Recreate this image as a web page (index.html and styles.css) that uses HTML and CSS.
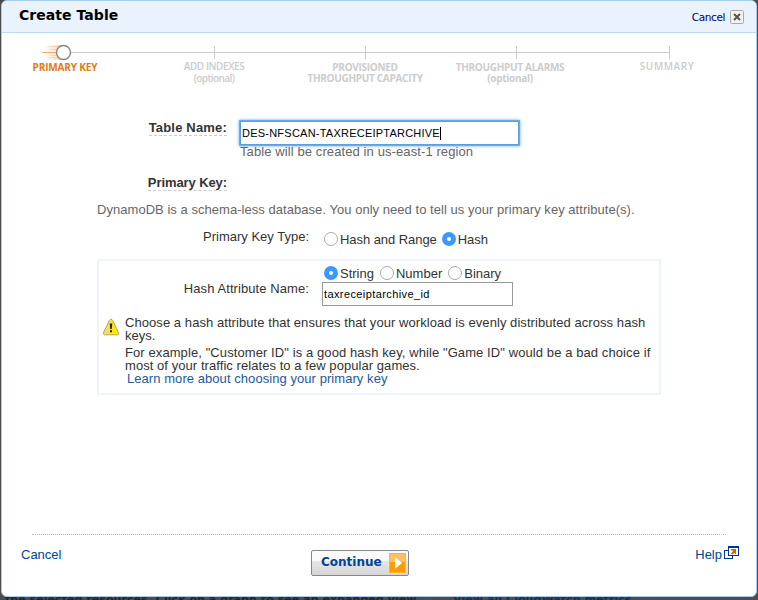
FILE: index.html
```html
<!DOCTYPE html>
<html lang="en">
<head>
<meta charset="utf-8">
<title>Create Table</title>
<link rel="stylesheet" href="styles.css">
</head>
<body>
<main class="dialog">
  <header class="head">
    <h1>Create Table</h1>
    <a class="close"><span>Cancel</span>
      <svg width="14" height="14" viewBox="0 0 14 14"><rect x=".5" y=".5" width="13" height="13" rx="1" fill="#f2f2ee" stroke="#aaa"/><path d="M4 4l6 6M10 4l-6 6" stroke="#555" stroke-width="2"/></svg>
    </a>
  </header>
  <svg class="track" width="740" height="26" viewBox="2 38 740 26">
    <defs><linearGradient id="trail"><stop offset="0" stop-color="#f3a55c" stop-opacity="0"/><stop offset="1" stop-color="#f3a55c" stop-opacity=".6"/></linearGradient></defs>
    <path d="M71 52.500H669M214.500 46v13M365.500 46v13M516.500 46v13M669.500 46v13" stroke="#ccc" fill="none"/>
    <path d="M45 46h16v1H45zM48 49h12v1H48zM50 55h10v1H50zM47 57h14v1H47z" fill="url(#trail)"/>
    <rect x="44" y="45" width="18" height="15" fill="url(#trail)" opacity=".7"/>
    <path d="M42 52.500h15" stroke="#f0ad70"/>
    <circle cx="63.500" cy="52.500" r="7" fill="#fff" stroke="#858585" stroke-width="1.400"/>
  </svg>
  <ol class="steps">
    <li class="on"><span>PRIMARY KEY</span></li>
    <li class="thin"><span>ADD INDEXES</span><span class="opt">(optional)</span></li>
    <li><span>PROVISIONED</span><span>THROUGHPUT CAPACITY</span></li>
    <li><span>THROUGHPUT ALARMS</span><span>(optional)</span></li>
    <li class="semi"><span>SUMMARY</span></li>
  </ol>
  <section class="name-row">
    <div class="label"><b class="t-name">Table Name:</b></div>
    <div>
      <div class="field focus"><span class="t-val">DES-NFSCAN-TAXRECEIPTARCHIVE</span><i class="caret"></i></div>
      <p class="hint"><span>Table will be created in us-east-1 region</span></p>
    </div>
  </section>
  <div class="label key"><b>Primary Key:</b></div>
  <p class="intro"><span>DynamoDB is a schema-less database. You only need to tell us your primary key attribute(s).</span></p>
  <div class="type-row">
    <div class="type-label"><span>Primary Key Type:</span></div>
    <div class="radios"><i class="radio"></i><span class="t-hr">Hash and Range</span><i class="radio sel"></i><span>Hash</span></div>
  </div>
  <section class="panel">
    <div class="attr">
      <div class="attr-label"><span>Hash Attribute Name:</span></div>
      <div>
        <div class="radios"><i class="radio sel"></i><span>String</span><i class="radio"></i><span>Number</span><i class="radio"></i><span>Binary</span></div>
        <div class="field small"><span class="t-id">taxreceiptarchive_id</span></div>
      </div>
    </div>
    <div class="note">
      <svg width="18" height="18" viewBox="0 0 18 18"><defs><linearGradient id="warn"><stop offset="0" stop-color="#eadb92"/><stop offset=".6" stop-color="#fae61e"/><stop offset="1" stop-color="#f8f000"/></linearGradient></defs><path d="M9 1.200Q10 1.200 10.600 2.400L16.600 14.800Q17 16.800 15.500 16.800H2.500Q1 16.800 1.400 14.800L7.400 2.400Q8 1.200 9 1.200z" fill="url(#warn)" stroke="#bda54a"/><path d="M7.700 5.600h2.600L9.700 11H8.300zM8 12.200h2v2H8z" fill="#222"/></svg>
      <div class="note-text">
        <p><span class="t-n1">Choose a hash attribute that ensures that your workload is evenly distributed across hash</span><br><span>keys.</span></p>
        <p><span class="t-n3">For example, "Customer ID" is a good hash key, while "Game ID" would be a bad choice if</span><br><span class="t-n4">most of your traffic relates to a few popular games.</span></p>
        <a><span class="t-n4">Learn more about choosing your primary key</span></a>
      </div>
    </div>
  </section>
  <footer class="foot">
    <a class="f-cancel"><span>Cancel</span></a>
    <div class="btn"><span>Continue</span><svg width="17" height="20" viewBox="0 0 17 20"><rect width="17" height="20" fill="#ff9c00"/><rect width="17" height="9" fill="#ffc062"/><rect x=".5" y=".5" width="16" height="19" fill="none" stroke="#ffb81c"/><path d="M6 4v12l7-6z" fill="#fff"/></svg></div>
    <a class="f-help"><span>Help</span><svg width="15" height="13" viewBox="0 0 15 13"><path d="M0 4h9v9H0z" fill="#039"/><path d="M1 5h7v7H1z" fill="#fff"/><path d="M4 0h11v10H4z" fill="#039"/><path d="M5 2h9v7H5z" fill="#fff"/><path d="M7 3h5v5h-1V6.500L8.500 8.500 7 7.500 9.500 4.500H7z" fill="#c60"/></svg></a>
  </footer>
</main>
<p class="behind"><span class="b1">the selected resources. Click on a graph to see an expanded view.</span><i class="arrow"></i><span class="b2">View all CloudWatch metrics</span></p>
</body>
</html>
```
FILE: styles.css
```css
* { box-sizing: border-box; }
body { margin: 0; width: 758px; height: 600px; overflow: hidden; background: #4b4d50; font: 13px/13px "Liberation Sans", Arial, sans-serif; color: #333; }
h1, p, ol { margin: 0; padding: 0; list-style: none; }
svg { display: block; flex: none; }
span { white-space: nowrap; }
.dialog { margin: 0 1px; height: 597px; border: 1px solid #a6cdee; border-radius: 6px; background: #fff; overflow: hidden; }
.head { display: flex; justify-content: space-between; height: 32px; padding: 7px 12px 0 17px; background: #eaf2fe; border-bottom: 1px solid #b9dcf5; }
h1 { font: bold 14px/14px "DejaVu Sans", sans-serif; color: #000; letter-spacing: .05px; }
.close { display: flex; gap: 4px; margin-top: 2px; font: 10.5px/15px "DejaVu Sans", sans-serif; color: #006; letter-spacing: -.4px; }
.close svg { margin-left: 1px; }
.track { margin-top: 5px; }
.steps { display: grid; grid-template-columns: 126px 172px 130px 160px 154px; height: 51px; font: bold 10px/11px "Open Sans", sans-serif; color: #ccc; letter-spacing: -.3px; }
.steps li { display: flex; flex-direction: column; align-items: center; margin-top: -2px; }
.steps .on { color: #e47911; letter-spacing: -.15px; }
.steps .thin { font-weight: 600; margin-top: -4px; line-height: 12px; letter-spacing: -.4px; }
.steps .opt { letter-spacing: -.6px; }
.steps .semi { font-weight: 600; margin-top: -3px; letter-spacing: .6px; }
.name-row { display: flex; gap: 13px; height: 61px; padding-top: 6px; }
.label { width: 225px; text-align: right; }
.label b { display: inline-block; height: 15px; border-bottom: 1px dashed #ccc; font-size: 13px; line-height: 13px; white-space: nowrap; }
.t-name { letter-spacing: .18px; }
.key b { letter-spacing: -.09px; }
.field { display: flex; align-items: center; width: 279px; height: 24px; padding-left: 1px; border: 1px solid #999; background: #fff; color: #000; font-size: 11px; }
.focus { border: 1px solid #5b9fe0; box-shadow: 0 0 0 1px #6aaaf0, 0 0 3px 1px #6aaaf0; }
.t-val { letter-spacing: .23px; }
.t-id { letter-spacing: .4px; }
.caret { width: 1px; height: 13px; background: #000; }
.hint { color: #666; letter-spacing: .1px; }
.key { height: 27px; }
.intro { padding-left: 95px; height: 27px; color: #666; letter-spacing: .04px; }
.type-row { display: flex; gap: 15px; height: 29px; }
.type-label { width: 307px; text-align: right; }
.radios { display: flex; align-items: center; height: 16px; }
.type-row .radios { margin-top: 1px; }
.radio { flex: none; width: 14px; height: 14px; margin-right: 2px; border: 1px solid #aaa; border-radius: 50%; background: #fff; }
.radio.sel { border: 5px solid #3b99fc; }
.radios span + .radio { margin-left: 6px; }
.radios .t-hr + .radio { margin-left: 5px; }
.t-hr { letter-spacing: -.06px; }
.panel { width: 564px; height: 136px; margin-left: 95px; padding-top: 3px; border: 2px solid #eef3fe; }
.attr { display: flex; gap: 13px; }
.attr-label { width: 210px; padding-top: 18px; text-align: right; letter-spacing: .08px; }
.attr .radios { margin-left: 2px; height: 18px; }
.small { width: 191px; height: 24px; }
.note { display: flex; gap: 5px; padding: 10px 0 0 3px; }
.note svg { margin-top: 2px; }
.note p { margin-bottom: 4px; }
.note a { display: block; margin: -4px 0 0 2px; color: #1a5a9e; }
.t-n1 { letter-spacing: .065px; }
.t-n3 { letter-spacing: .09px; }
.t-n4 { letter-spacing: .06px; }
.foot { display: grid; grid-template-columns: 309px 98px 1fr; width: 737px; height: 60px; margin-top: 139px; position: relative; }
.foot::before { content: ""; position: absolute; left: 30px; top: 0; width: 694px; border-top: 1px dotted #bbb; }
.foot a { color: #049; }
.f-cancel { padding: 14px 0 0 19px; }
.f-help { display: flex; justify-content: flex-end; gap: 2px; padding-top: 12px; }
.f-help span { padding-top: 2px; }
.btn { display: flex; justify-content: space-between; margin-top: 16px; height: 26px; padding: 2px 2px 0 9px; border: 1px solid #888; border-radius: 2px; background: linear-gradient(#fafafa 0 40%, #e6e6e6 42%, #d6d6d6); font: bold 12px/18px "DejaVu Sans", sans-serif; color: #049; }
.behind { height: 3px; overflow: hidden; display: flex; padding-left: 5px; font: bold 11px/5px "DejaVu Sans", sans-serif; color: #24272b; }
.b1 { letter-spacing: .06px; }
.arrow { width: 3px; height: 2px; margin: 0 17px 0 13px; background: #63412c; }
.b2 { color: #203048; letter-spacing: .07px; }
```
